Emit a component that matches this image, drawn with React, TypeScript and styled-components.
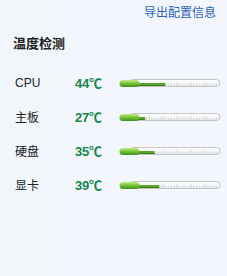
import React from "react";
import styled, { createGlobalStyle } from "styled-components";

const Global = createGlobalStyle`
  html, body { margin: 0; padding: 0; }
  body {
    background: #f3f6fd;
    font-family: "Noto Sans CJK SC", "Liberation Sans", sans-serif;
  }
`;

const Page = styled.div`
  width: 227px;
  height: 276px;
  box-sizing: border-box;
  background: linear-gradient(90deg, #f1f6fb 0%, #f4f6fd 60%, #f4f6fe 100%);
  display: flex;
  flex-direction: column;
`;

const TopBar = styled.div`
  display: flex;
  justify-content: flex-end;
  padding: 3px 11px 0 0;
  height: 18px;
`;

const ExportLink = styled.a`
  font-size: 12px;
  line-height: 18px;
  color: #2a64b8;
  text-decoration: none;
  cursor: pointer;
`;

const Title = styled.div`
  margin: 14px 0 0 13px;
  font-size: 13px;
  line-height: 16px;
  font-weight: bold;
  color: #222;
`;

const List = styled.div`
  display: flex;
  flex-direction: column;
  gap: 18px;
  margin-top: 22px;
`;

const Row = styled.div`
  display: grid;
  grid-template-columns: 60px 44px 102px;
  align-items: center;
  padding-left: 15px;
  height: 16px;
`;

const Label = styled.span<{ $latin?: boolean }>`
  font-family: ${(p) => (p.$latin ? '"Liberation Sans", sans-serif' : '"Noto Sans CJK SC", sans-serif')};
  font-size: 12px;
  color: #222;
`;

const Temp = styled.span`
  font-family: "Liberation Sans", "Noto Sans CJK SC", sans-serif;
  font-size: 13px;
  font-weight: bold;
  color: #13884a;
  letter-spacing: -0.3px;
`;

const Gauge: React.FC<{ value: number }> = ({ value }) => {
  const fillEnd = Math.min(99, Math.max(20, -5.8 + 1.18 * value));
  const ticks: React.ReactNode[] = [];
  for (let x = 16, i = 0; x < 99; x += 2.8, i++) {
    ticks.push(
      <line key={i} x1={x} x2={x} y1={i % 5 === 0 ? 4.2 : 5.6} y2={8} stroke="#b9b9b9" strokeWidth={0.6} />
    );
  }
  return (
    <svg width="102" height="10" viewBox="0 0 102 10">
      <defs>
        <linearGradient id="bulb" x1="0" y1="0" x2="0" y2="1">
          <stop offset="0" stopColor="#c4ec8a" />
          <stop offset="0.45" stopColor="#7cc63e" />
          <stop offset="1" stopColor="#3f8f1a" />
        </linearGradient>
        <linearGradient id="tube" x1="0" y1="0" x2="0" y2="1">
          <stop offset="0" stopColor="#ffffff" />
          <stop offset="1" stopColor="#eef0f2" />
        </linearGradient>
      </defs>
      <rect x={10} y={1.5} width={91} height={7} rx={3.5} fill="url(#tube)" stroke="#b5b7ba" strokeWidth={0.8} />
      {ticks}
      <rect x={12} y={5} width={fillEnd - 12} height={3} fill="#5aa52a" />
      <rect x={12} y={7} width={fillEnd - 12} height={1} fill="#3a7f16" />
      <rect x={0.5} y={2} width={20} height={7} rx={3.5} fill="url(#bulb)" />
    </svg>
  );
};

const data = [
  { name: "CPU", temp: 44, latin: true },
  { name: "主板", temp: 27 },
  { name: "硬盘", temp: 35 },
  { name: "显卡", temp: 39 },
];

export default function App() {
  return (
    <>
      <Global />
      <Page>
        <TopBar>
          <ExportLink>导出配置信息</ExportLink>
        </TopBar>
        <Title>温度检测</Title>
        <List>
          {data.map((d) => (
            <Row key={d.name}>
              <Label $latin={d.latin}>{d.name}</Label>
              <Temp>{d.temp}℃</Temp>
              <Gauge value={d.temp} />
            </Row>
          ))}
        </List>
      </Page>
    </>
  );
}
